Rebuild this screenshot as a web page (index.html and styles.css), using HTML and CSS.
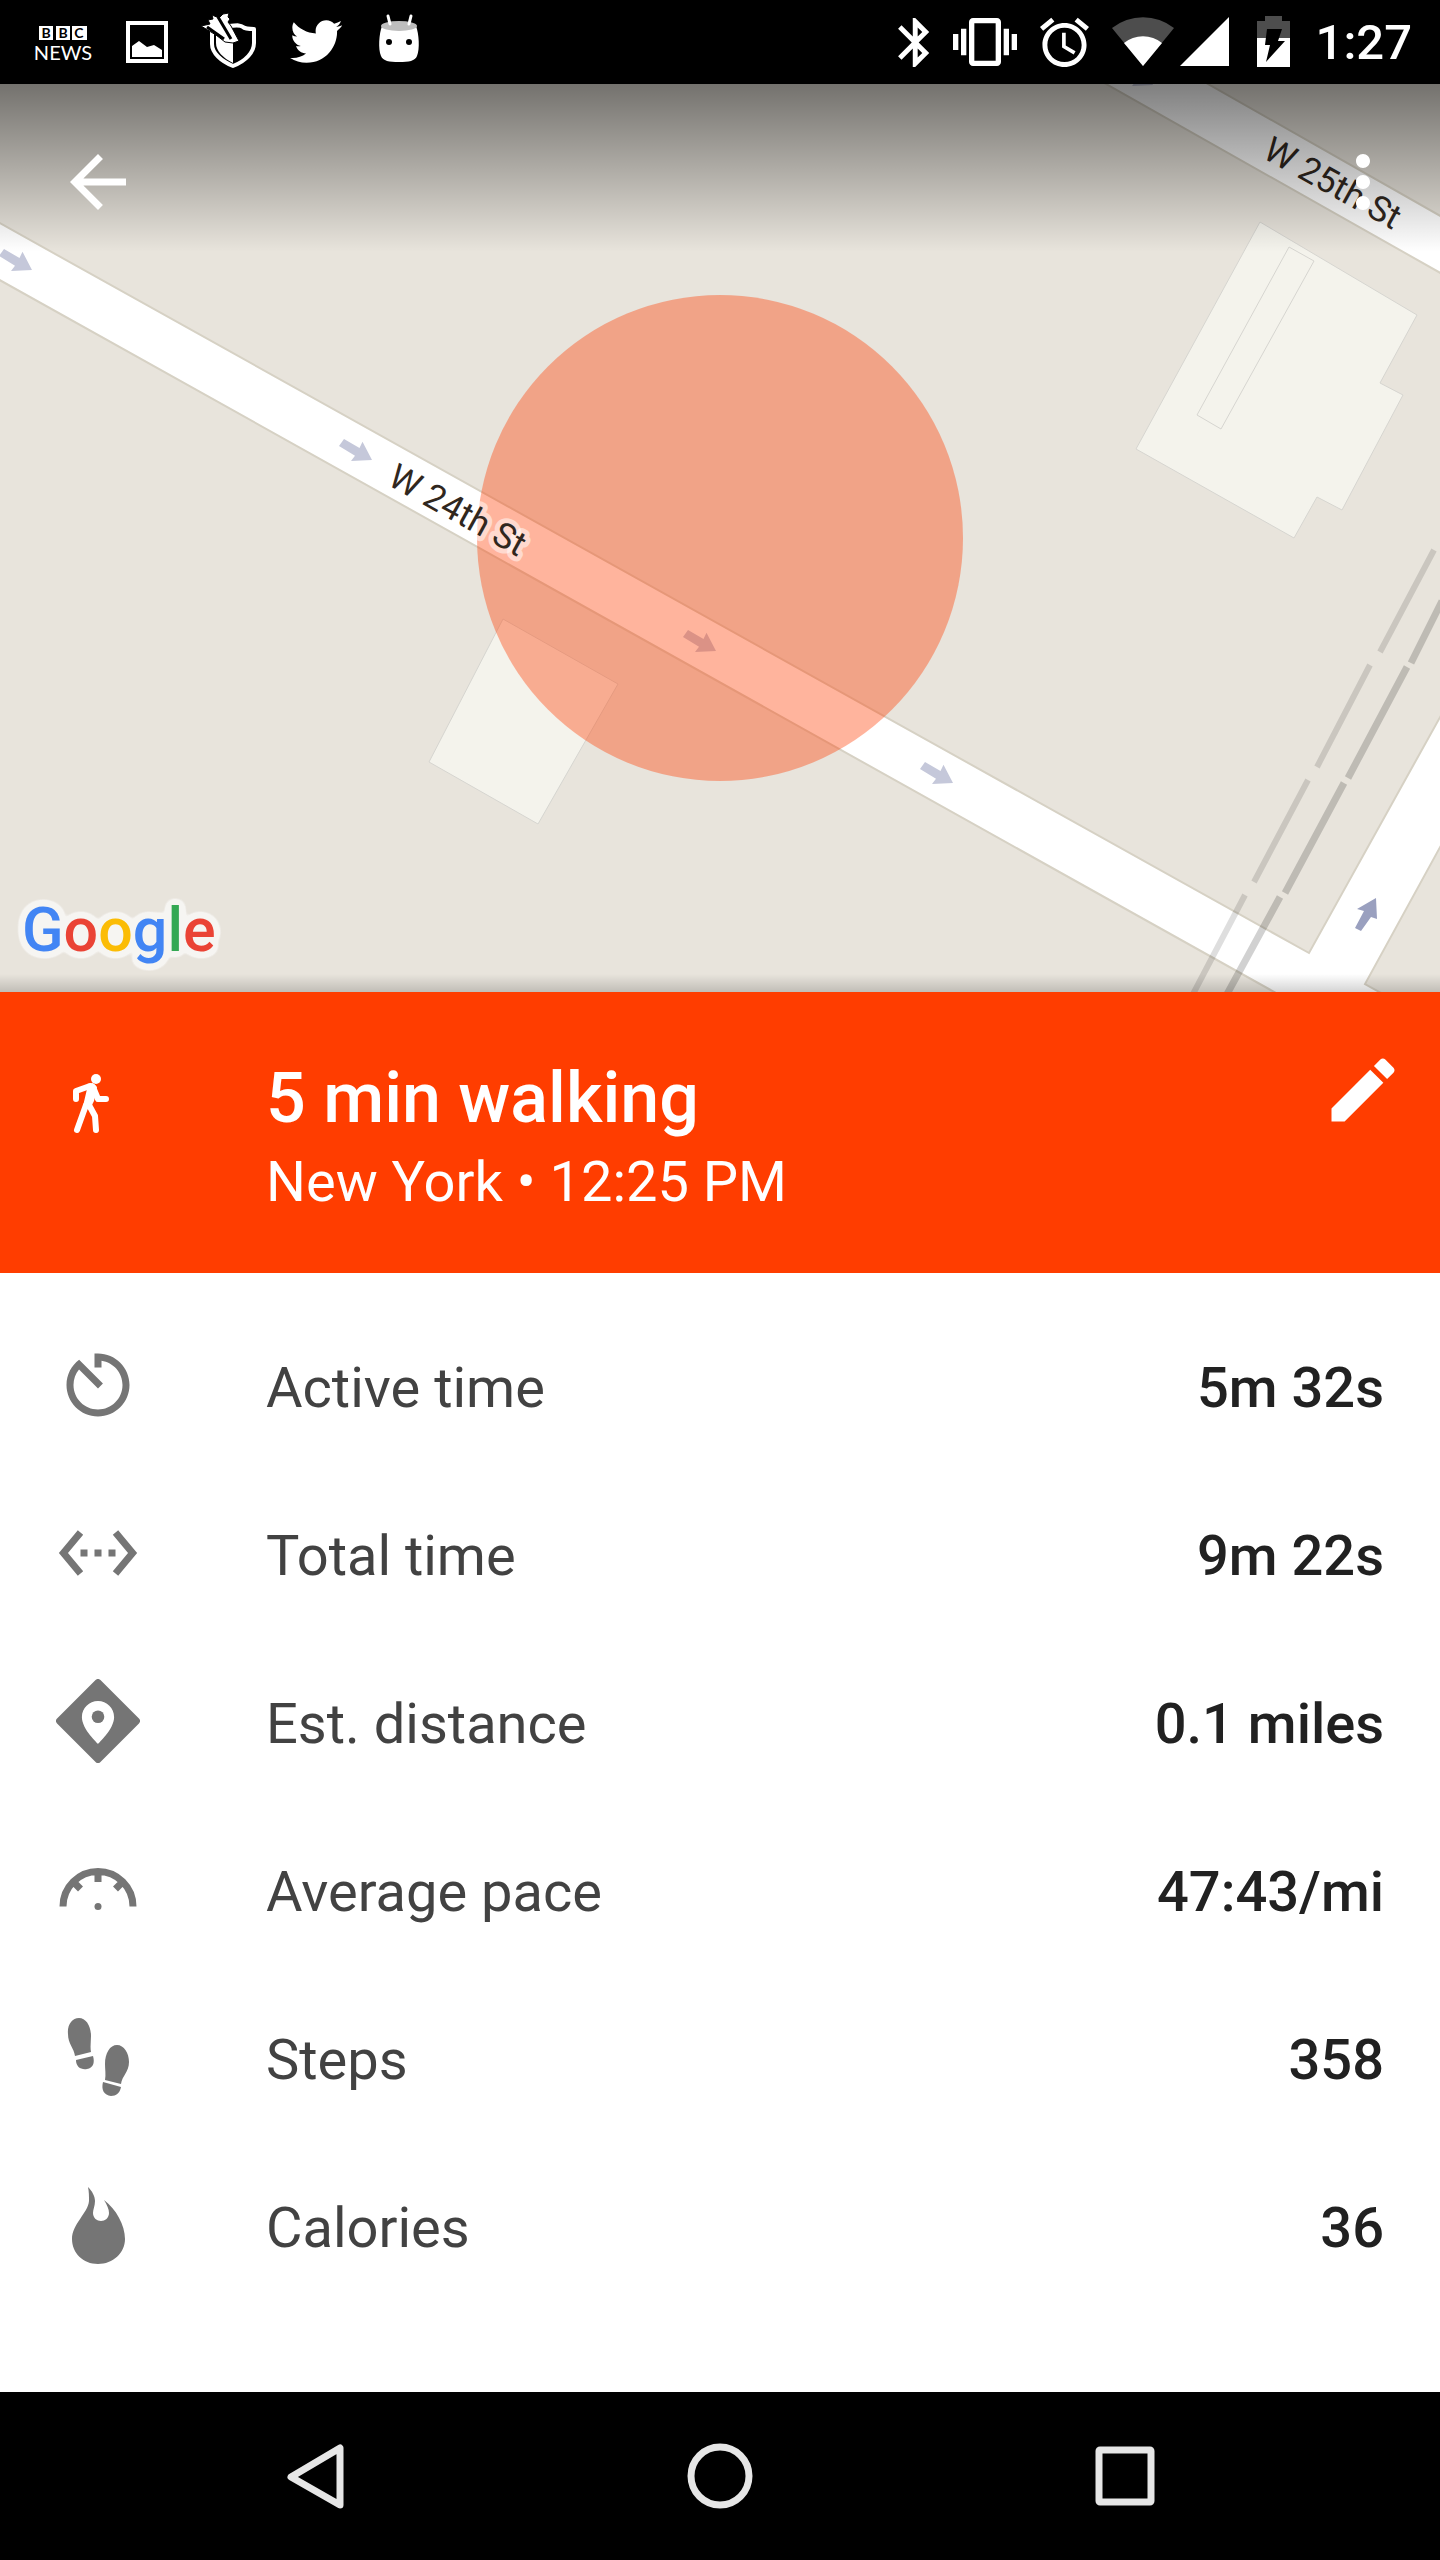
FILE: index.html
```html
<!DOCTYPE html>
<html lang="en">
<head>
    <meta charset="UTF-8">
    <meta name="viewport" content="width=device-width, initial-scale=1.0">
    <title>5 min walking</title>
    <link rel="stylesheet" href="styles.css">
</head>
<body>
    <!-- Status bar -->
    <div class="status-bar">
        <div class="notifications">
            <svg class="icon" viewBox="0 0 84 84">
                <path fill="#fff" d="M18 26h14v14H18zM35 26h14v14H35zM51 26h15v14H51z"/>
                <g class="bbc-letters">
                    <text x="25" y="38">B</text>
                    <text x="42" y="38">B</text>
                    <text x="58" y="38">C</text>
                </g>
                <text class="bbc-news" x="42" y="60">NEWS</text>
            </svg>
            <svg class="icon" viewBox="0 0 84 84">
                <rect x="23" y="23" width="38" height="38" fill="none" stroke="#fff" stroke-width="4"/>
                <path fill="#fff" d="M27 57V46l7-5 8 6 7-2 8 5v7z"/>
            </svg>
            <svg class="icon" viewBox="0 0 84 84">
                <path fill="none" stroke="#fff" stroke-width="4" stroke-linejoin="round" d="M23 30v14c0 9 9 17 21 22 13-5 21-14 21-23V29c-5 0-9 0-11-2-2-2-5-2-14-1"/>
                <path fill="#fff" d="M27 34l17 6v23c-10-5-17-12-17-20z"/>
                <path fill="#fff" stroke="#000" stroke-width="1" d="M12 26l9-2-2-4 5-1-1-4 7 3 4-4 6-1-1 4 2 2-2 3 3 4 8 15-6 2-8-1-9-7z"/>
                <path fill="none" stroke="#000" stroke-width="3" d="M29 17l13 22M18 27l17 12"/>
            </svg>
            <svg class="icon" viewBox="0 0 84 84">
                <path fill="#fff" transform="translate(15 14) scale(2.3)" d="M23.643 4.937c-.835.37-1.732.62-2.675.733.962-.576 1.7-1.49 2.048-2.578-.9.534-1.897.922-2.958 1.13-.85-.904-2.06-1.47-3.4-1.47-2.572 0-4.658 2.086-4.658 4.66 0 .364.042.718.12 1.06-3.873-.195-7.304-2.05-9.602-4.868-.4.69-.63 1.49-.63 2.342 0 1.616.823 3.043 2.072 3.878-.764-.025-1.482-.234-2.11-.583v.06c0 2.257 1.605 4.14 3.737 4.568-.392.106-.803.162-1.227.162-.3 0-.593-.028-.877-.082.593 1.85 2.313 3.198 4.352 3.234-1.595 1.25-3.604 1.995-5.786 1.995-.376 0-.747-.022-1.112-.065 2.062 1.323 4.51 2.093 7.14 2.093 8.57 0 13.255-7.098 13.255-13.254 0-.2-.005-.402-.014-.602.91-.658 1.7-1.477 2.323-2.41z"/>
            </svg>
            <svg class="icon" viewBox="0 0 84 84">
                <path fill="#fff" d="M25 26c-3 8-4 23-1 30 2 5 8 6 18 6s16-1 18-6c3-7 2-22-1-30z"/>
                <ellipse cx="42" cy="26" rx="18" ry="5" fill="#bdbdbd"/>
                <path stroke="#fff" stroke-width="3" stroke-linecap="round" d="M31 16l2 8M54 16l-2 8"/>
                <circle cx="32" cy="42" r="3"/>
                <circle cx="52" cy="42" r="3"/>
            </svg>
        </div>
        <div class="system">
            <svg class="bluetooth" viewBox="5 2 13 20"><path fill="#fff" d="M17.71 7.71L12 2h-1v7.59L6.41 5 5 6.41 10.59 12 5 17.59 6.41 19 11 14.41V22h1l5.71-5.71-4.3-4.29 4.3-4.29zM13 5.83l1.88 1.88L13 9.59V5.83zm1.88 10.46L13 18.17v-3.76l1.88 1.88z"/></svg>
            <svg class="vibrate" viewBox="0 0 24 24"><path fill="#fff" d="M0 15h2V9H0v6zm3 2h2V7H3v10zm19-8v6h2V9h-2zm-3 8h2V7h-2v10zM16.5 3h-9C6.67 3 6 3.67 6 4.5v15c0 .83.67 1.5 1.5 1.5h9c.83 0 1.5-.67 1.5-1.5v-15c0-.83-.67-1.5-1.5-1.5zM16 19H8V5h8v14z"/></svg>
            <svg class="alarm" viewBox="2 2 20 20"><path fill="#fff" d="M22 5.72l-4.6-3.86-1.29 1.53 4.6 3.86L22 5.72zM7.88 3.39L6.6 1.86 2 5.71l1.29 1.53 4.59-3.85zM12.5 8H11v6l4.75 2.85.75-1.23-4-2.37V8zM12 4c-4.97 0-9 4.03-9 9s4.02 9 9 9c4.97 0 9-4.03 9-9s-4.03-9-9-9zm0 16c-3.87 0-7-3.13-7-7s3.13-7 7-7 7 3.13 7 7-3.13 7-7 7z"/></svg>
            <svg class="network" viewBox="0 0 118 84">
                <path fill="#4d4d4d" d="M31 66L0 28a50 50 0 0 1 62 0z"/>
                <path fill="#fff" d="M31 66L12 43a30 30 0 0 1 38 0z"/>
                <path fill="#fff" d="M68 66h49V17z"/>
            </svg>
            <svg class="battery" viewBox="0 0 40 84">
                <path fill="#4d4d4d" d="M4 21h8v-5h17v5h8v18H4z"/>
                <path fill="#fff" d="M4 38h33v29H4z"/>
                <path d="M14 29h15l-4 12h7L13 62l4-17h-5z"/>
            </svg>
            <span class="clock">1:27</span>
        </div>
    </div>

    <!-- Map -->
    <div class="map">
        <svg class="map-canvas" viewBox="0 84 1440 908">
            <defs>
                <path id="arrow" d="M4-7l15.500 9 3-6.300L32 14l-21 1 4-5.300L-1 0z"/>
                <!-- light outline round the logo -->
                <filter id="halo" x="-10%" y="-20%" width="120%" height="140%" color-interpolation-filters="sRGB">
                    <feGaussianBlur in="SourceAlpha" stdDeviation="4"/>
                    <feComponentTransfer result="outline">
                        <feFuncA type="linear" slope="25" intercept="-.5"/>
                    </feComponentTransfer>
                    <feFlood flood-color="#f6f5f2"/>
                    <feComposite operator="in" in2="outline" result="back"/>
                    <feMerge>
                        <feMergeNode in="back"/>
                        <feMergeNode in="SourceGraphic"/>
                    </feMerge>
                </filter>
            </defs>
            <rect y="84" width="1440" height="908" fill="#e8e4dc"/>

            <!-- buildings -->
            <g fill="#f4f3ec" stroke="#d6d5d0">
                <path d="M503 619l115 65-80 140-109-62z"/>
                <path d="M1260 222l157 93-37 68 23 12-61 115-25-13-23 41-158-89z"/>
                <path d="M1289 247l25 14-93 168-24-14z"/>
            </g>

            <!-- roads -->
            <g fill="#fff" stroke="#d6d1c4" stroke-width="2">
                <path d="M-4 221L1309 953 1444 710V840L1365 984 1390 998H1285L-4 278z"/>
                <path d="M1099 80l345 195v-57L1201 80z"/>
            </g>

            <!-- railway -->
            <g fill="none" stroke-width="6">
                <path stroke="#000" stroke-opacity=".13" d="M1434 550l-54 102M1370 665l-53 102M1308 780l-54 102M1245 895l-53 101"/>
                <path stroke="#000" stroke-opacity=".18" stroke-width="7" d="M1442 601l-31 62M1407 667l-59 111M1344 783l-59 110M1280 897l-54 99"/>
            </g>

            <!-- one way arrows -->
            <g fill="#c5c8da">
                <use href="#arrow" x="0" y="256"/>
                <use href="#arrow" x="340" y="446"/>
                <use href="#arrow" x="684" y="637"/>
                <use href="#arrow" x="921" y="769"/>
                <use href="#arrow" x="1121" y="71"/>
            </g>
            <path fill="#9aa0bf" d="M1376 898l-19 11 7 2-9 17 6 3 10-14 6 2z"/>

            <!-- location radius -->
            <circle cx="720" cy="538" r="243" fill="#ff3d00" fill-opacity=".385"/>

            <text class="street" transform="translate(386 484) rotate(29)">W 24th St</text>
            <text class="street" transform="translate(1261 157) rotate(29)">W 25th St</text>

            <text class="google" x="22" y="951" filter="url(#halo)"><tspan fill="#4285f4">G</tspan><tspan fill="#ea4335">o</tspan><tspan fill="#fbbc05">o</tspan><tspan fill="#4285f4">g</tspan><tspan fill="#34a853">l</tspan><tspan fill="#ea4335">e</tspan></text>
        </svg>
        <div class="toolbar">
            <button class="icon-button" aria-label="Back">
                <svg class="icon" viewBox="0 0 24 24"><path fill="#fff" d="M20 11H7.830l5.590-5.590L12 4l-8 8 8 8 1.410-1.410L7.830 13H20v-2z"/></svg>
            </button>
            <button class="icon-button" aria-label="More options">
                <svg class="icon" viewBox="0 0 24 24"><path fill="#fff" d="M12 8c1.100 0 2-.9 2-2s-.9-2-2-2-2 .9-2 2 .9 2 2 2zm0 2c-1.100 0-2 .9-2 2s.9 2 2 2 2-.9 2-2-.9-2-2-2zm0 6c-1.100 0-2 .9-2 2s.9 2 2 2 2-.9 2-2-.9-2-2-2z"/></svg>
            </button>
        </div>
    </div>

    <!-- Activity header -->
    <header class="activity">
        <svg class="icon activity-icon" viewBox="0 0 84 84">
            <circle cx="40" cy="17" r="5" fill="#fff"/>
            <path fill="#fff" d="M31 22l6-1 4 4-3 14-4 8-7-3 4-17z"/>
            <path fill="none" stroke="#fff" stroke-width="6" stroke-linecap="round" stroke-linejoin="round" d="M20 37v-8l14-5M37 25l5 12h8M30 43L21 68M33 43l6 11 1 14"/>
        </svg>
        <div class="activity-text">
            <h1>5 min walking</h1>
            <p>New York • 12:25 PM</p>
        </div>
        <button class="icon-button" aria-label="Edit">
            <svg class="icon" viewBox="0 0 24 24"><path fill="#fff" d="M3 17.250V21h3.750L17.810 9.940l-3.750-3.750L3 17.250zM20.710 7.040c.39-.39.39-1.020 0-1.410l-2.340-2.340c-.39-.39-1.020-.39-1.410 0l-1.830 1.830 3.750 3.750 1.830-1.830z"/></svg>
        </button>
    </header>

    <!-- Stats -->
    <main>
        <ul class="stats">
            <li>
                <svg class="icon" viewBox="0 0 24 24"><path fill="#757575" d="M11 3v4h2V5.080c3.390.49 6 3.390 6 6.920 0 3.870-3.130 7-7 7s-7-3.130-7-7c0-1.680.59-3.220 1.580-4.420L12 13l1.410-1.410-6.800-6.800v.02C4.420 6.450 3 9.050 3 12c0 4.970 4.020 9 9 9 4.970 0 9-4.030 9-9s-4.030-9-9-9h-1z"/></svg>
                <span class="label">Active time</span>
                <span class="value">5m 32s</span>
            </li>
            <li>
                <svg class="icon" viewBox="0 0 24 24"><path fill="#757575" d="M7.770 6.760L6.230 5.480.82 12l5.410 6.520 1.540-1.280L3.420 12l4.350-5.240zM7 13h2v-2H7v2zm10-2h-2v2h2v-2zm-6 2h2v-2h-2v2zm6.770-7.520l-1.540 1.280L20.580 12l-4.350 5.240 1.540 1.280L23.180 12l-5.410-6.520z"/></svg>
                <span class="label">Total time</span>
                <span class="value">9m 22s</span>
            </li>
            <li>
                <svg class="icon" viewBox="0 0 24 24">
                    <path fill="#757575" d="M23.700 11.300l-11-11a1 1 0 0 0-1.400 0l-11 11a1 1 0 0 0 0 1.400l11 11a1 1 0 0 0 1.400 0l11-11a1 1 0 0 0 0-1.400z"/>
                    <path fill="#fff" d="M12 6.300c-2.500 0-4.600 2-4.600 4.600 0 3.400 4.600 7.600 4.600 7.600s4.600-4.200 4.600-7.600c0-2.600-2.100-4.600-4.600-4.600z"/>
                    <circle cx="12" cy="10.800" r="1.800" fill="#757575"/>
                </svg>
                <span class="label">Est. distance</span>
                <span class="value">0.1 miles</span>
            </li>
            <li>
                <svg class="icon" viewBox="0 0 24 24">
                    <path fill="none" stroke="#757575" stroke-width="2" d="M2 17a10 10 0 0 1 20 0M12 7v3M5 10l2 2M19 10l-2 2"/>
                    <circle cx="12" cy="17" r="1" fill="#757575"/>
                </svg>
                <span class="label">Average pace</span>
                <span class="value">47:43/mi</span>
            </li>
            <li>
                <svg class="icon" viewBox="0 0 84 84">
                    <g fill="#757575">
                        <path d="M23 3c7 0 12 8 12 18 0 5-1 11 0 16l-16 4c-1-8-7-12-7-22C11 10 16 3 23 3z"/>
                        <path d="M20 45l17-4c2 7 0 12-6 13-6 1-11-2-11-9z"/>
                        <path d="M61 30c7 0 12 8 12 17 0 10-7 14-8 22l-16-4c1-5 0-11 0-16 0-11 5-19 12-19z"/>
                        <path d="M47 67l18 5c-1 6-5 9-10 9-7-1-10-6-8-14z"/>
                    </g>
                </svg>
                <span class="label">Steps</span>
                <span class="value">358</span>
            </li>
            <li>
                <svg class="icon" viewBox="0 0 84 84"><path fill="#757575" d="M32 4c4 4 7 9 7 14s-2 8-2 12c0 5 4 8 8 8s8-3 8-8c0-4-2-8-5-13 12 9 21 25 21 39 0 14-12 25-27 25S16 70 16 56c0-15 16-26 17-38 0-5 0-9-1-14z"/></svg>
                <span class="label">Calories</span>
                <span class="value">36</span>
            </li>
        </ul>
    </main>

    <!-- Navigation bar -->
    <nav class="nav-bar">
        <button class="icon-button" aria-label="Back">
            <svg class="icon" viewBox="0 0 84 84"><path class="nav-shape" d="M67 14v57L18 43z"/></svg>
        </button>
        <button class="icon-button" aria-label="Home">
            <svg class="icon" viewBox="0 0 84 84"><circle class="nav-shape" cx="42" cy="42" r="29"/></svg>
        </button>
        <button class="icon-button" aria-label="Recent apps">
            <svg class="icon" viewBox="0 0 84 84"><rect class="nav-shape" x="16" y="16" width="52" height="52" rx="1"/></svg>
        </button>
    </nav>
</body>
</html>
```
FILE: styles.css
```css
* {
    box-sizing: border-box;
}
body {
    margin: 0;
    min-height: 100vh;
    display: flex;
    flex-direction: column;
    font-family: Roboto, sans-serif;
    background-color: #fff;
}
svg {
    display: block;
    flex-shrink: 0;
}
.icon {
    width: 84px;
    height: 84px;
}
.icon-button {
    padding: 0;
    border: none;
    background: none;
    cursor: pointer;
}

/* Status bar */
.status-bar {
    display: flex;
    justify-content: space-between;
    height: 84px;
    padding: 0 28px 0 21px;
    background-color: #000;
    color: #fff;
}
.notifications {
    display: flex;
}
.system {
    display: flex;
    align-items: center;
    gap: 23px;
}
.bbc-letters {
    font-family: Lato, sans-serif;
    font-size: 14px;
    font-weight: 700;
    text-anchor: middle;
}
.bbc-news {
    font-family: Lato, sans-serif;
    font-size: 20px;
    fill: #fff;
    text-anchor: middle;
}
.bluetooth {
    width: 32px;
    height: 49px;
}
.vibrate {
    width: 64px;
    height: 64px;
}
.alarm {
    width: 49px;
    height: 49px;
    overflow: visible;
}
.network {
    width: 118px;
    height: 84px;
}
.battery {
    width: 40px;
    height: 84px;
}
.clock {
    font-size: 49px;
    font-weight: 500;
}

/* Map */
.map {
    position: relative;
}
.map::after {
    content: "";
    position: absolute;
    left: 0;
    right: 0;
    bottom: 0;
    height: 18px;
    background: linear-gradient(rgba(0, 0, 0, 0), rgba(0, 0, 0, 0.17));
}
.map-canvas {
    width: 100%;
    height: auto;
}
.street {
    font-size: 35px;
    fill: #30271e;
    stroke: rgba(255, 255, 255, 0.5);
    stroke-width: 10px;
    stroke-linejoin: round;
    paint-order: stroke;
}
.google {
    font-size: 61px;
    font-weight: 500;
}
.toolbar {
    position: absolute;
    top: 0;
    left: 0;
    right: 0;
    display: flex;
    justify-content: space-between;
    align-items: flex-start;
    height: 168px;
    padding: 56px 35px 0 56px;
    background: linear-gradient(rgba(0, 0, 0, 0.5), rgba(0, 0, 0, 0));
}

/* Activity header */
.activity {
    display: flex;
    align-items: flex-start;
    min-height: 281px;
    padding: 56px 35px 56px 56px;
    background-color: #ff3d00;
    color: #fff;
}
.activity-icon {
    margin-top: 14px;
}
.activity-text {
    flex: 1;
    margin-left: 126px;
    padding-top: 9px;
}
.activity-text h1 {
    margin: 0 0 10px;
    font-size: 70px;
    font-weight: 500;
    line-height: 82px;
}
.activity-text p {
    margin: 0;
    font-size: 56px;
    line-height: 66px;
}

/* Stats */
main {
    flex: 1;
}
.stats {
    margin: 0;
    padding: 28px 56px;
    list-style-type: none;
}
.stats li {
    display: flex;
    align-items: center;
    height: 168px;
    font-size: 56px;
    line-height: 66px;
}
.label {
    flex: 1;
    margin-left: 126px;
    padding-top: 6px;
    color: #424242;
}
.value {
    padding-top: 6px;
    font-weight: 500;
    color: #212121;
}

/* Navigation bar */
.nav-bar {
    display: grid;
    grid-template-columns: repeat(3, 1fr);
    justify-items: center;
    align-items: center;
    height: 168px;
    padding: 0 112px;
    background-color: #000;
}
.nav-shape {
    fill: none;
    stroke: #e6e6e6;
    stroke-width: 7px;
    stroke-linejoin: round;
}
```
